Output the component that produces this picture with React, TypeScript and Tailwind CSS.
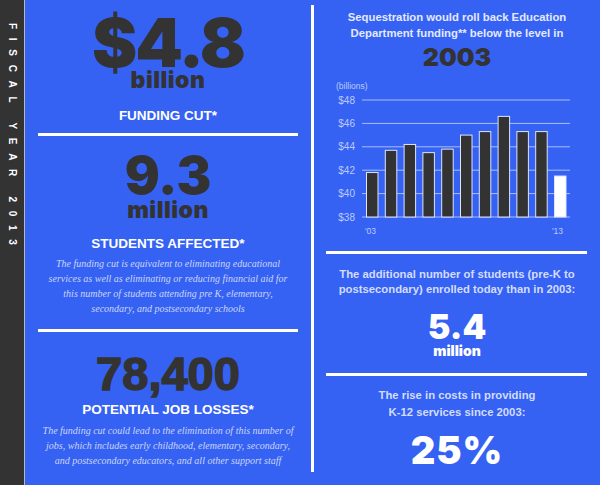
const bars = [41.8, 43.7, 44.2, 43.5, 43.8, 45.0, 45.3, 46.6, 45.3, 45.3, 41.5]
const ticks = [48, 46, 44, 42, 40, 38]
const yOf = (v: number) => 137 - (v - 38) * 11.7

function FundingChart() {
  return (
    <svg width="285" height="160" viewBox="0 0 285 160" className="block" fontFamily="'Liberation Sans', Arial, sans-serif">
      <text x="22" y="9" fontSize="8.5" fill="#bccafb">(billions)</text>
      {ticks.map((t) => (
        <g key={t}>
          <line x1="48" x2="256" y1={yOf(t)} y2={yOf(t)} stroke="#a9bcfb" strokeWidth="1" />
          <text x="41" y={yOf(t) + 3.5} textAnchor="end" fontSize="10" fill="#bccafb">
            {`$${t}`}
          </text>
        </g>
      ))}
      {bars.map((v, i) => (
        <rect
          key={i}
          x={52.5 + i * 18.8}
          y={yOf(v)}
          width="11.5"
          height={137 - yOf(v)}
          fill={i === bars.length - 1 ? '#ffffff' : '#333333'}
          stroke="#dce4ff"
          strokeWidth="1"
        />
      ))}
      <text x="51" y="154" fontSize="8.5" fill="#bccafb">'03</text>
      <text x="238" y="154" fontSize="8.5" fill="#bccafb">'13</text>
    </svg>
  )
}

export default function App() {
  const big = "[font-family:Inter,'Liberation_Sans',sans-serif] font-black text-[#333333]"
  const head = "[font-family:'Liberation_Sans',Arial,sans-serif] font-bold"
  const note = "[font-family:'Liberation_Serif','Times_New_Roman',serif] italic text-[10px] leading-[15px] text-[#cbd5f7] whitespace-nowrap"

  return (
    <div className="w-[600px] h-[485px] bg-[#3562f3] flex overflow-hidden">
      {/* Sidebar */}
      <div className="w-[25px] shrink-0 bg-[#333333] border-r border-[#b8b8b8] flex justify-center pt-[23px]">
        <span className="[writing-mode:vertical-rl] [font-family:'Liberation_Sans',Arial,sans-serif] font-bold text-[10px] tracking-[8.7px] text-white leading-none">
          FISCAL YEAR 2013
        </span>
      </div>

      {/* Left column */}
      <div className="w-[286px] shrink-0 flex flex-col items-center">
        <div className={`${big} text-[68px] leading-[50px] tracking-[-2px] mt-[16.5px]`}>$4.8</div>
        <div className={`${big} text-[23px] leading-[20px] tracking-[0.5px] mt-[3px]`}>billion</div>
        <div className={`${head} text-[13.5px] leading-[14px] text-white mt-[19.5px]`}>FUNDING CUT*</div>
        <div className="self-stretch mx-[13px] h-[3px] bg-white mt-[10px]" />

        <div className={`${big} text-[52px] leading-[40px] mt-[20px]`}>9.3</div>
        <div className={`${big} text-[23px] leading-[20px] tracking-[0.5px] mt-[3.5px]`}>million</div>
        <div className={`${head} text-[13.5px] leading-[14px] text-white mt-[17.5px]`}>STUDENTS AFFECTED*</div>
        <p className={`${note} text-center mt-[4.5px]`}>
          The funding cut is equivalent to eliminating educational
          <br />
          services as well as eliminating or reducing financial aid for
          <br />
          this number of students attending pre K, elementary,
          <br />
          secondary, and postsecondary schools
        </p>
        <div className="self-stretch mx-[13px] h-[3px] bg-white mt-[13.5px]" />

        <div className="[font-family:'Liberation_Sans',Arial,sans-serif] font-bold text-[#333333] text-[47px] leading-[36px] [-webkit-text-stroke:1.5px_#333333] mt-[23.5px]">
          78,400
        </div>
        <div className={`${head} text-[13.5px] leading-[14px] text-white mt-[11.5px]`}>POTENTIAL JOB LOSSES*</div>
        <p className={`${note} text-center mt-[5.5px]`}>
          The funding cut could lead to the elimination of this number of
          <br />
          jobs, which includes early childhood, elementary, secondary,
          <br />
          and postsecondary educators, and all other support staff
        </p>
      </div>

      {/* Divider */}
      <div className="w-[3px] shrink-0 bg-white mt-[5px] h-[467px]" />

      {/* Right column */}
      <div className="flex-1 flex flex-col items-center">
        <p className={`${head} text-[11.3px] leading-[16px] text-[#e3e9ff] text-center mt-[9px]`}>
          Sequestration would roll back Education
          <br />
          Department funding** below the level in
        </p>
        <div className={`${big} text-[25px] leading-[20px] mt-[6px]`}>2003</div>
        <div className="self-stretch mt-[13px]">
          <FundingChart />
        </div>
        <div className="self-stretch ml-[12px] mr-[13px] h-[3px] bg-white mt-[11px]" />

        <p className={`${head} text-[11.3px] leading-[15px] text-[#d3dcff] text-center mt-[12.5px]`}>
          The additional number of students (pre-K to
          <br />
          postsecondary) enrolled today than in 2003:
        </p>
        <div className={`${big} !text-white text-[34px] leading-[26px] mt-[17.5px]`}>5.4</div>
        <div className={`${big} !text-white text-[14px] leading-[12px] mt-[4.5px]`}>million</div>
        <div className="self-stretch ml-[12px] mr-[13px] h-[3px] bg-white mt-[16px]" />

        <p className={`${head} text-[11.3px] leading-[17px] text-[#d3dcff] text-center mt-[11.5px]`}>
          The rise in costs in providing
          <br />
          K-12 services since 2003:
        </p>
        <div className={`${big} !text-white text-[38px] leading-[30px] tracking-[1px] mt-[14px]`}>25%</div>
      </div>
    </div>
  )
}
